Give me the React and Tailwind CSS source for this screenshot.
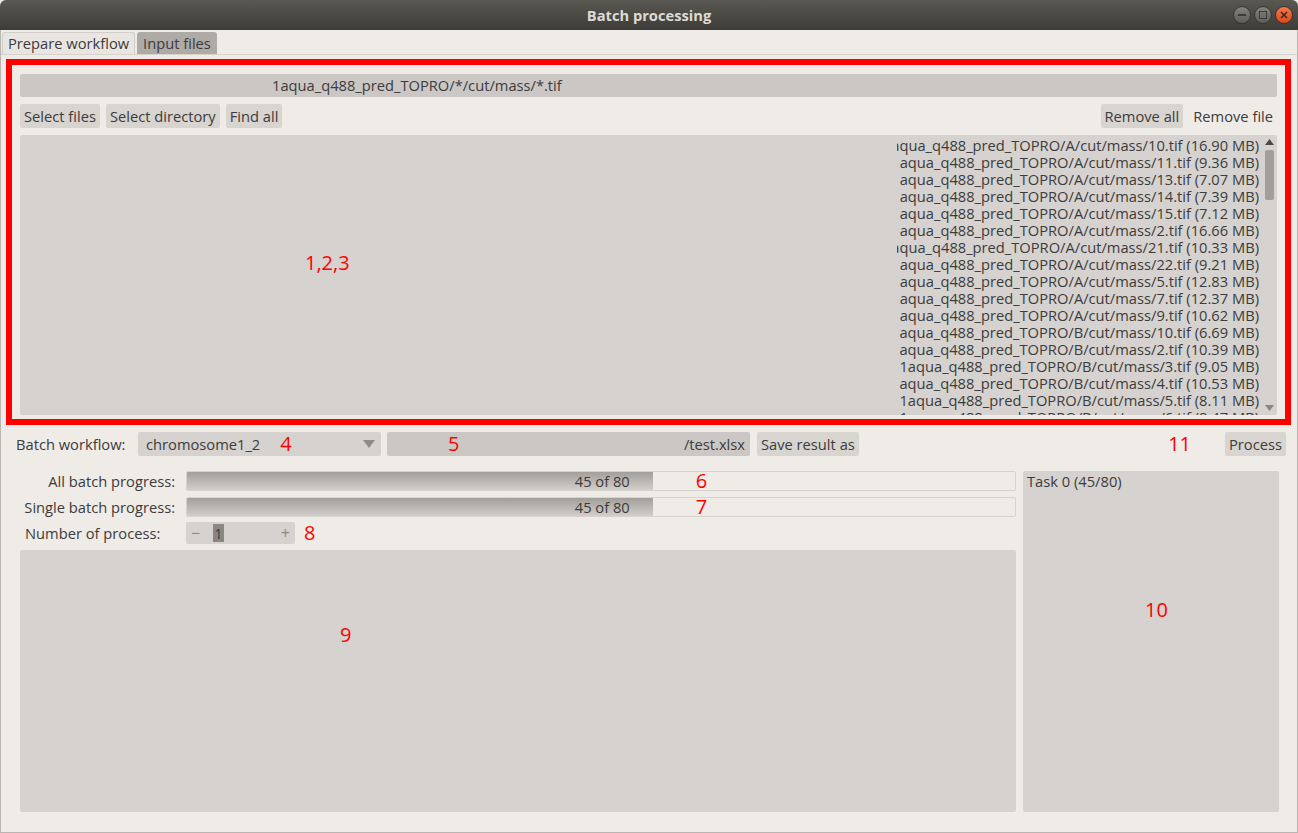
import React from 'react';

const files = [
  ['A', '10', '16.90'],
  ['A', '11', '9.36'],
  ['A', '13', '7.07'],
  ['A', '14', '7.39'],
  ['A', '15', '7.12'],
  ['A', '2', '16.66'],
  ['A', '21', '10.33'],
  ['A', '22', '9.21'],
  ['A', '5', '12.83'],
  ['A', '7', '12.37'],
  ['A', '9', '10.62'],
  ['B', '10', '6.69'],
  ['B', '2', '10.39'],
  ['B', '3', '9.05'],
  ['B', '4', '10.53'],
  ['B', '5', '8.11'],
  ['B', '6', '8.47'],
];

const font = { fontFamily: '"Open Sans", "DejaVu Sans", sans-serif' };

const Button = ({ children, className = '' }) => (
  <div className={`flex h-[24px] items-center rounded-[2px] bg-[#d8d4d0] px-[4px] text-[14.7px] text-[#3c3c3c] ${className}`}>
    {children}
  </div>
);

const Marker = ({ children, className = '' }) => (
  <span className={`text-[20px] leading-none text-[#ff0000] ${className}`}>{children}</span>
);

const WindowButton = ({ close, children }) => (
  <div
    className={`flex h-[18px] w-[18px] items-center justify-center rounded-full border border-[#35342f] ${
      close ? 'bg-gradient-to-b from-[#f5774b] to-[#dd4814]' : 'bg-gradient-to-b from-[#85837e] to-[#5f5d58]'
    }`}
  >
    {children}
  </div>
);

const ProgressRow = ({ label, marker }) => (
  <div className="flex h-[20px] items-center">
    <div className="w-[155px] whitespace-nowrap text-right text-[14.7px] text-[#3c3c3c]">{label}</div>
    <div className="ml-[11px] flex h-[20px] flex-1 overflow-hidden rounded-[2px] border border-[#d6d2ce] bg-[#efebe7]">
      <div className="flex w-[56.25%] items-center justify-end bg-gradient-to-b from-[#a29e9a] to-[#d2cecb] pr-[23px] text-[14.7px] text-[#3c3c3c]">
        45 of 80
      </div>
      <div className="flex flex-1 items-center pl-[43px]">
        <Marker>{marker}</Marker>
      </div>
    </div>
  </div>
);

export default function App() {
  return (
    <div style={font} className="flex h-[833px] w-[1298px] flex-col overflow-hidden bg-[#efebe7] text-[#3c3c3c]">
      {/* title bar */}
      <div className="relative flex h-[30px] shrink-0 items-center justify-center rounded-t-[6px] bg-gradient-to-b from-[#5a5852] to-[#3d3c38]">
        <span className="text-[14.7px] font-bold text-[#dfdbd2]">Batch processing</span>
        <div className="absolute right-[5px] top-[6px] flex gap-[3px]">
          <WindowButton>
            <div className="h-[2px] w-[8px] bg-[#3c3b37]" />
          </WindowButton>
          <WindowButton>
            <div className="h-[8px] w-[8px] border-[1.5px] border-[#3c3b37]" />
          </WindowButton>
          <WindowButton close>
            <svg width="8" height="8" viewBox="0 0 8 8">
              <path d="M1 1L7 7M7 1L1 7" stroke="#3c2a20" strokeWidth="1.6" />
            </svg>
          </WindowButton>
        </div>
      </div>

      <div className="flex flex-1 flex-col border-x border-b border-[#b9b5b1]">
        {/* tabs */}
        <div className="flex h-[24px] items-end gap-[2px] pl-[1px] pt-[2px]">
          <div className="flex h-[22px] items-center rounded-t-[3px] border border-b-0 border-[#d2cec9] bg-[#e9e5e1] px-[5px] text-[14.7px]">
            Prepare workflow
          </div>
          <div className="flex h-[22px] items-center rounded-t-[3px] bg-[#aeaaa6] px-[6px] text-[14.7px]">
            Input files
          </div>
        </div>

        <div className="flex flex-1 flex-col border-t border-[#d6d2ce]">
          {/* red box 1,2,3 */}
          <div className="ml-[5px] mt-[4px] flex h-[366px] w-[1285px] flex-col border-[6px] border-[#ff0000] px-[8px] pt-[9px]">
            <div className="flex h-[23px] items-center rounded-[2px] bg-[#cbc7c4] pl-[252px] text-[14.7px]">
              1aqua_q488_pred_TOPRO/*/cut/mass/*.tif
            </div>
            <div className="mt-[7px] flex gap-[6px]">
              <Button>Select files</Button>
              <Button>Select directory</Button>
              <Button>Find all</Button>
              <div className="flex-1" />
              <Button>Remove all</Button>
              <Button className="bg-transparent">Remove file</Button>
            </div>
            <div className="mt-[7px] flex h-[280px] rounded-[2px] bg-[#d6d2cf]">
              <div className="flex flex-1 items-center pb-[25px] pl-[285px]">
                <Marker>1,2,3</Marker>
              </div>
              <div className="w-[362px] overflow-hidden pt-[2px]">
                {files.map(([d, n, s]) => (
                  <div key={d + n} className="flex h-[17px] items-center justify-end whitespace-nowrap text-[14.7px] leading-[17px]">
                    1aqua_q488_pred_TOPRO/{d}/cut/mass/{n}.tif ({s} MB)
                  </div>
                ))}
              </div>
              <div className="ml-[3px] mr-[1px] flex w-[14px] flex-col items-center py-[4px]">
                <svg width="9" height="6" viewBox="0 0 9 6"><path d="M0 6L4.5 0L9 6Z" fill="#4c4a47" /></svg>
                <div className="mt-[5px] h-[50px] w-[9px] rounded-[2px] bg-[#a29e9a]" />
                <div className="flex-1" />
                <svg width="9" height="6" viewBox="0 0 9 6"><path d="M0 0L4.5 6L9 0Z" fill="#8a8783" /></svg>
              </div>
            </div>
          </div>

          {/* workflow row */}
          <div className="mt-[7px] flex h-[24px] items-center pr-[11px]">
            <div className="w-[122px] whitespace-nowrap pl-[15px] text-[14.7px]">Batch workflow:</div>
            <div className="ml-[15px] flex h-[24px] w-[243px] items-center rounded-[2px] bg-[#d6d2cf] pl-[8px] pr-[6px] text-[14.7px]">
              chromosome1_2
              <Marker className="ml-[20px]">4</Marker>
              <div className="flex-1" />
              <svg width="12" height="8" viewBox="0 0 12 8"><path d="M0 0H12L6 8Z" fill="#8e8b87" /></svg>
            </div>
            <div className="ml-[6px] flex h-[24px] w-[363px] items-center rounded-[2px] bg-[#cbc7c4] pl-[61px] pr-[5px] text-[14.7px]">
              <Marker>5</Marker>
              <div className="flex-1" />
              /test.xlsx
            </div>
            <Button className="ml-[7px]">Save result as</Button>
            <div className="flex-1" />
            <Marker className="mr-[34px]">11</Marker>
            <Button>Process</Button>
          </div>

          {/* progress + panels */}
          <div className="mt-[15px] flex flex-1 pb-[20px]">
            <div className="ml-[19px] flex w-[996px] flex-col">
              <ProgressRow label="All batch progress:" marker="6" />
              <div className="mt-[6px]">
                <ProgressRow label="Single batch progress:" marker="7" />
              </div>
              <div className="mt-[5px] flex h-[22px] items-center">
                <div className="w-[155px] whitespace-nowrap pl-[5px] text-[14.7px]">Number of process:</div>
                <div className="ml-[11px] flex h-[22px] w-[109px] items-center rounded-[2px] bg-[#d6d2cf] px-[5px] text-[16px] text-[#8d8a86]">
                  <span>−</span>
                  <span className="ml-[13px] bg-[#8a8783] px-[1px] text-[14.7px] leading-[18px] text-[#3c3c3c]">1</span>
                  <div className="flex-1" />
                  <span>+</span>
                </div>
                <Marker className="ml-[9px]">8</Marker>
              </div>
              <div className="mt-[6px] flex flex-1 items-start rounded-[2px] bg-[#d6d2cf] pl-[320px] pt-[75px]">
                <Marker>9</Marker>
              </div>
            </div>
            <div className="ml-[7px] flex w-[256px] flex-col rounded-[2px] bg-[#d6d2cf] px-[4px]">
              <div className="text-[14.7px] leading-[20px]">Task 0 (45/80)</div>
              <div className="mt-[108px] pl-[118px]">
                <Marker>10</Marker>
              </div>
            </div>
          </div>
        </div>
      </div>
    </div>
  );
}
